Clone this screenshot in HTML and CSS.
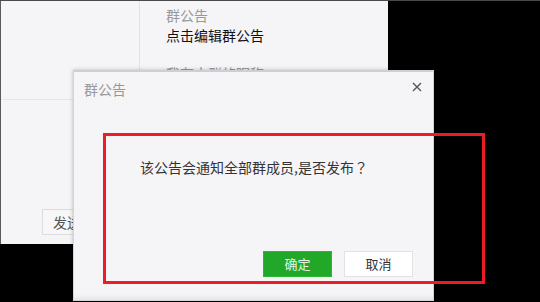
FILE: index.html
```html
<!DOCTYPE html>
<html>
<head>
<meta charset="utf-8">
<title>群公告</title>
<link rel="stylesheet" href="styles.css">
</head>
<body>
<div class="window">
    <div class="chat">
        <div class="chat-top"></div>
        <div class="chat-input">
            <button class="send">发送</button>
        </div>
    </div>
    <div class="info">
        <div class="info-label">群公告</div>
        <div class="info-value">点击编辑群公告</div>
        <div class="info-label info-next">我在本群的昵称</div>
    </div>
</div>

<div class="dialog">
    <div class="dialog-head">
        <span class="dialog-title">群公告</span>
        <svg class="close" width="10" height="10" viewBox="0 0 10 10">
            <path d="M1 1L9 9M9 1L1 9" stroke="#555" stroke-width="1.4" fill="none"/>
        </svg>
    </div>
    <div class="dialog-body">
        <p class="message">该公告会通知全部群成员,是否发布<span class="qmark">？</span></p>
    </div>
    <div class="dialog-foot">
        <button class="btn btn-ok">确定</button>
        <button class="btn btn-cancel">取消</button>
    </div>
</div>

<div class="mark"></div>
</body>
</html>
```

FILE: styles.css
```css
body {
    margin: 0;
    width: 540px;
    height: 302px;
    overflow: hidden;
    position: relative;
    background-color: #000;
    border-top: 1px solid #4a4a4a;
    box-sizing: border-box;
    font-family: "Noto Sans CJK SC", "Noto Sans", sans-serif;
}

.window {
    position: absolute;
    left: 0;
    top: 0;
    width: 388px;
    height: 243px;
    display: flex;
    background-color: #f5f4f7;
    border-left: 1px solid #5a5a5a;
    box-sizing: border-box;
}

.chat {
    width: 138px;
    display: flex;
    flex-direction: column;
    border-right: 1px solid #e3e2e6;
}

.chat-top {
    height: 98px;
    border-bottom: 1px solid #e6e5e8;
}

.chat-input {
    margin-top: auto;
    padding: 0 27px 9px 0;
    display: flex;
    justify-content: flex-end;
}

.send {
    width: 70px;
    height: 26px;
    padding: 0 0 0 10px;
    text-align: left;
    background-color: #f7f7f8;
    border: 1px solid #dcdcdf;
    color: #555;
    font-family: inherit;
    font-size: 14px;
    line-height: 24px;
}

.info {
    padding: 4px 0 0 26px;
    font-size: 14px;
    line-height: 20px;
}

.info-label {
    color: #999;
}

.info-value {
    color: #111;
}

.info-next {
    margin-top: 18px;
}

.dialog {
    position: absolute;
    left: 73px;
    top: 69px;
    width: 361px;
    height: 231px;
    display: flex;
    flex-direction: column;
    background-color: #f5f4f7;
    border: 1px solid #d4d4d8;
    border-top: 2px solid #cfcfd3;
    box-sizing: border-box;
    box-shadow: 0 0 4px rgba(0, 0, 0, 0.25), inset 0 -8px 6px -6px rgba(0, 0, 0, 0.08);
}

.dialog-head {
    display: flex;
    align-items: center;
    justify-content: space-between;
    padding: 7px 11px 0 10px;
    height: 20px;
}

.dialog-title {
    color: #999;
    font-size: 14px;
    line-height: 20px;
}

.close {
    margin-top: -4px;
}

.dialog-body {
    flex: 1;
    padding: 58px 0 0 66px;
}

.message {
    margin: 0;
    color: #333;
    font-size: 14px;
    line-height: 20px;
}

.qmark {
    font-family: "Noto Sans CJK TC", sans-serif;
}

.dialog-foot {
    display: flex;
    justify-content: flex-end;
    gap: 12px;
    padding: 0 20px 23px 0;
}

.btn {
    width: 69px;
    height: 26px;
    padding: 0;
    font-family: inherit;
    font-size: 13px;
    line-height: 24px;
}

.btn-ok {
    background-color: #22a829;
    border: 1px solid #2cb533;
    color: #e4f5e2;
}

.btn-cancel {
    background-color: #fff;
    border: 1px solid #e2e2e5;
    color: #333;
}

.mark {
    position: absolute;
    left: 103px;
    top: 132px;
    width: 382px;
    height: 151px;
    border: 3px solid #ee1c25;
    box-sizing: border-box;
}
```
